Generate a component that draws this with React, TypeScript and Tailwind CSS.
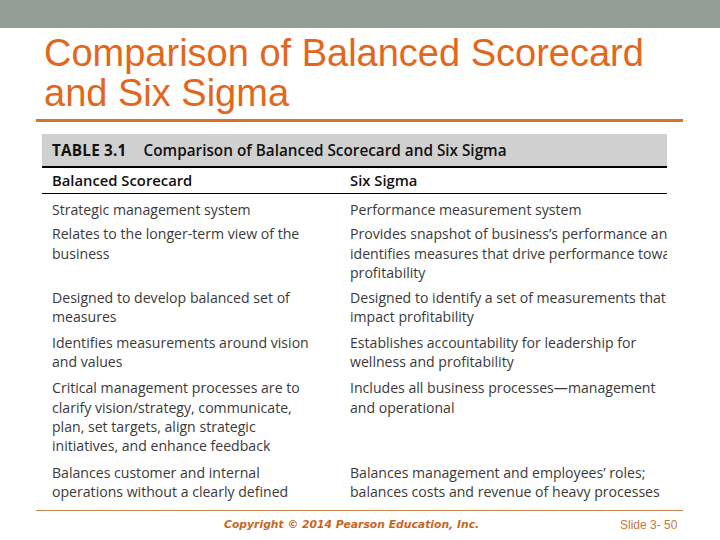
import React from "react";

const rows: { a: string[]; b: string[]; pt: string }[] = [
  { a: ["Strategic management system"], b: ["Performance measurement system"], pt: "pt-[6px]" },
  {
    a: ["Relates to the longer-term view of the", "business"],
    b: [
      "Provides snapshot of business\u2019s performance and",
      "identifies measures that drive performance toward",
      "profitability",
    ],
    pt: "pt-[5px]",
  },
  {
    a: ["Designed to develop balanced set of", "measures"],
    b: ["Designed to identify a set of measurements that", "impact profitability"],
    pt: "pt-[6px]",
  },
  {
    a: ["Identifies measurements around vision", "and values"],
    b: ["Establishes accountability for leadership for", "wellness and profitability"],
    pt: "pt-[6px]",
  },
  {
    a: [
      "Critical management processes are to",
      "clarify vision/strategy, communicate,",
      "plan, set targets, align strategic",
      "initiatives, and enhance feedback",
    ],
    b: ["Includes all business processes\u2014management", "and operational"],
    pt: "pt-[7px]",
  },
  {
    a: ["Balances customer and internal", "operations without a clearly defined"],
    b: ["Balances management and employees\u2019 roles;", "balances costs and revenue of heavy processes"],
    pt: "pt-[7px]",
  },
];

export default function App() {
  return (
    <div className="w-[720px] h-[540px] bg-white overflow-hidden relative">
      <div className="h-[28px] bg-[#929e95]" />
      <div
        className="pl-[44px] pt-[5px] text-[38px] leading-[40px] text-[#e3671b]"
        style={{ fontFamily: '"Liberation Sans", Arial, sans-serif' }}
      >
        <div className="whitespace-nowrap">Comparison of Balanced Scorecard</div>
        <div className="whitespace-nowrap">and Six Sigma</div>
      </div>
      <div className="mt-[6px] ml-[36px] w-[647px] h-[3px] bg-[#d9702b]" />
      <div
        className="mt-[12px] ml-[42px] w-[625px] h-[368px] overflow-hidden text-[#3a3a3a]"
        style={{ fontFamily: '"Open Sans", "Noto Sans", sans-serif' }}
      >
        <div className="h-[32px] bg-[#d0d0d0] flex items-center pl-[10px] text-[15.3px] text-[#111]">
          <span className="font-bold tracking-[0.2px]">TABLE 3.1</span>
          <span className="ml-[17px] font-semibold">Comparison of Balanced Scorecard and Six Sigma</span>
        </div>
        <div className="h-[2px] bg-black" />
        <div className="h-[25px] flex items-center text-[14.8px] font-semibold text-[#111]">
          <div className="w-[308px] pl-[10px]">Balanced Scorecard</div>
          <div>Six Sigma</div>
        </div>
        <div className="h-[1px] bg-black" />
        {rows.map((r, i) => (
          <div key={i} className={`flex text-[14.1px] leading-[19.3px] ${r.pt}`}>
            <div className="w-[308px] pl-[10px] shrink-0">
              {r.a.map((l, j) => (
                <div key={j} className="whitespace-nowrap">{l}</div>
              ))}
            </div>
            <div className="shrink-0">
              {r.b.map((l, j) => (
                <div key={j} className="whitespace-nowrap">{l}</div>
              ))}
            </div>
          </div>
        ))}
      </div>
      <div className="mt-[8px] ml-[36px] w-[647px] h-[1px] bg-[#c8834f]" />
      <div className="flex items-center h-[28px]">
        <div
          className="ml-[224px] w-[380px] text-[10.8px] font-bold italic text-[#c8651e] whitespace-nowrap"
          style={{ fontFamily: '"DejaVu Sans", Verdana, sans-serif' }}
        >
          Copyright © 2014 Pearson Education, Inc.
        </div>
        <div
          className="ml-[16px] text-[12px] text-[#c07a3c] whitespace-nowrap"
          style={{ fontFamily: '"Liberation Sans", Arial, sans-serif' }}
        >
          Slide 3- 50
        </div>
      </div>
    </div>
  );
}
